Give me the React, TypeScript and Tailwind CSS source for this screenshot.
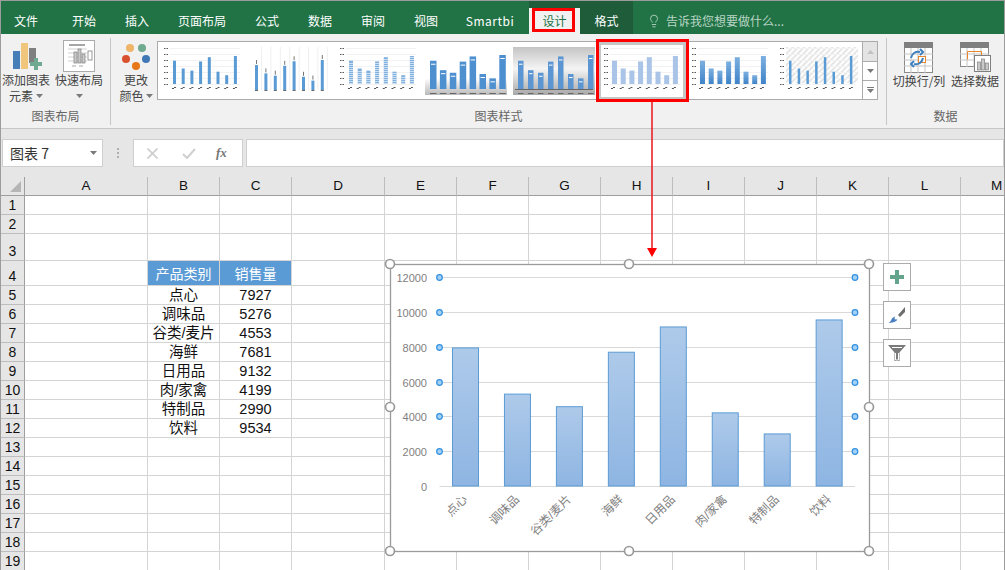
import { Fragment } from 'react';
import { Lightbulb } from 'lucide-react';

const tabs = [
  { label: '文件', cls: 'w-[50px]' },
  { label: '开始', cls: 'w-[52px] ml-[7px]' },
  { label: '插入', cls: 'w-[52px] ml-px' },
  { label: '页面布局', cls: 'w-[76px] ml-px' },
  { label: '公式', cls: 'w-[52px] ml-px' },
  { label: '数据', cls: 'w-[52px] ml-px' },
  { label: '审阅', cls: 'w-[52px] ml-px' },
  { label: '视图', cls: 'w-[52px] ml-px' },
  { label: 'Smartbi', cls: 'w-[74px] ml-px tracking-[0.5px]' },
];

const sales = [7927, 5276, 4553, 7681, 9132, 4199, 2990, 9534];
const categories = ['点心', '调味品', '谷类/麦片', '海鲜', '日用品', '肉/家禽', '特制品', '饮料'];
const colLabels = ['A', 'B', 'C', 'D', 'E', 'F', 'G', 'H', 'I', 'J', 'K', 'L', 'M'];
const rowCount = 19;

const thumbs = [
  { start: 15, width: 3, step: 8.7, base: 42, max: 28, fill: '#5b9bd5', kind: 'plain' },
  { start: 9, width: 3, step: 9.4, base: 48, max: 30, fill: '#5b9bd5', kind: 'error' },
  { start: 15, width: 4, step: 8.7, base: 42, max: 28, fill: '#7fb0de', kind: 'striped' },
  { start: 8, width: 6.5, step: 9.9, base: 47, max: 34, fill: '#4e8fd0', kind: 'shadow' },
  { start: 8, width: 5.5, step: 10, base: 47, max: 34, fill: '#5b96d2', kind: 'gray' },
  { start: 14, width: 5, step: 8.7, base: 42, max: 28, fill: '#a9c4e6', kind: 'pale' },
  { start: 14, width: 5, step: 8.7, base: 42, max: 28, fill: 'url(#thumbBlue)', kind: 'plain' },
  { start: 15, width: 2.5, step: 8.7, base: 42, max: 28, fill: '#5b9bd5', kind: 'hatch' },
];

function Thumb({ index }: { index: number }) {
  const t = thumbs[index];
  const big = t.kind === 'shadow' || t.kind === 'gray' || t.kind === 'error';
  return (
    <svg width="82" height="52" viewBox="3 3 82 52" className="block">
      <defs>
        <linearGradient id="thumbBlue" x1="0" y1="0" x2="0" y2="1">
          <stop offset="0" stopColor="#7db0e0" />
          <stop offset="1" stopColor="#3f83c8" />
        </linearGradient>
        <linearGradient id="thumbShadow" x1="0" y1="0" x2="0" y2="1">
          <stop offset="0" stopColor="#ffffff" />
          <stop offset="0.65" stopColor="#ffffff" />
          <stop offset="1" stopColor="#b9b9b9" />
        </linearGradient>
        <linearGradient id="thumbGray" x1="0" y1="0" x2="0" y2="1">
          <stop offset="0" stopColor="#c4c4c4" />
          <stop offset="0.45" stopColor="#f4f4f4" />
          <stop offset="1" stopColor="#a8a8a8" />
        </linearGradient>
        <pattern id="thumbHatch" width="4" height="4" patternUnits="userSpaceOnUse" patternTransform="rotate(45)">
          <rect width="4" height="4" fill="#ffffff" />
          <rect width="2" height="4" fill="#e6e6e6" />
        </pattern>
      </defs>
      {t.kind === 'shadow' && <rect x="3" y="5" width="82" height="48" fill="url(#thumbShadow)" />}
      {t.kind === 'gray' && <rect x="3" y="5" width="82" height="48" fill="url(#thumbGray)" />}
      {t.kind === 'hatch' && <rect x="12" y="5" width="72" height="36" fill="url(#thumbHatch)" />}
      {t.kind === 'error' &&
        sales.map((_, i) => (
          <rect key={i} x={t.start + i * t.step + 6} y="5" width="1" height="43" fill="#efefef" />
        ))}
      {!big &&
        [0, 1, 2, 3, 4, 5, 6].map((i) => (
          <Fragment key={i}>
            <rect x="12" y={6 + i * 6} width="70" height="1" fill="#f2f2f2" />
            <rect x="6" y={6 + i * 6} width="1.5" height="1" fill="#555555" />
            <rect x="8.5" y={6 + i * 6} width="1.5" height="1" fill="#555555" />
          </Fragment>
        ))}
      {t.kind === 'gray' && <rect x="5" y={t.base} width="78" height="1" fill="#666666" />}
      {sales.map((v, i) => {
        const h = (v / 9534) * t.max;
        const x = t.start + i * t.step;
        return (
          <Fragment key={i}>
            <rect x={x} y={t.base - h} width={t.width} height={h} fill={t.fill} />
            {t.kind === 'striped' &&
              Array.from({ length: Math.floor(h / 2) }).map((_, k) => (
                <rect key={k} x={x} y={t.base - 2 * k - 1} width={t.width} height="0.6" fill="#ffffff" />
              ))}
            {t.kind === 'error' && <rect x={x + 1} y={t.base - h - 5} width="1" height="4" fill="#777777" />}
            {(t.kind === 'shadow' || t.kind === 'gray') && (
              <rect x={x + 1} y={t.base - h + 3} width={t.width - 2} height="1" fill="#ffffff" />
            )}
            {big ? (
              <rect x={x} y={t.base + (t.kind === 'error' ? 0 : 4)} width={t.width} height="1" fill="#666666" />
            ) : (
              <Fragment>
                <rect x={x - 1} y={t.base + 4} width="2" height="1" fill="#555555" />
                <rect x={x + 1} y={t.base + 3} width="2" height="1" fill="#555555" />
              </Fragment>
            )}
          </Fragment>
        );
      })}
    </svg>
  );
}

function Caret({ className = '' }: { className?: string }) {
  return (
    <svg width="7" height="4" viewBox="0 0 7 4" className={className}>
      <path d="M0 0h7L3.5 4z" fill="#7a7a7a" />
    </svg>
  );
}

function AddElementIcon() {
  return (
    <svg width="30" height="30" viewBox="0 0 30 30">
      <rect x="1" y="9" width="7" height="18" fill="#467fb7" />
      <rect x="9" y="1" width="7" height="26" fill="#f0c67c" />
      <rect x="17" y="6" width="7" height="15" fill="#7f7f7f" />
      <path d="M21 18h4v-4h4v4h4v4h-4v4h-4v-4h-4z" transform="translate(-3 2)" fill="#6fa98f" />
    </svg>
  );
}

function QuickLayoutIcon() {
  return (
    <svg width="32" height="32" viewBox="0 0 32 32">
      <rect x="0.5" y="0.5" width="31" height="31" fill="#ffffff" stroke="#ababab" />
      <rect x="6" y="4" width="16" height="2" fill="#a6a6a6" />
      <path d="M5 9h19M5 13h19M5 17h19M5 21h19" stroke="#d0d0d0" />
      <rect x="11" y="12" width="3" height="11" fill="#c9c9c9" stroke="#7f7f7f" strokeWidth="0.7" />
      <rect x="15" y="9" width="3" height="14" fill="#c9c9c9" stroke="#7f7f7f" strokeWidth="0.7" />
      <rect x="19" y="14" width="3" height="9" fill="#c9c9c9" stroke="#7f7f7f" strokeWidth="0.7" />
      <rect x="25" y="11" width="4" height="9" fill="#ffffff" stroke="#7f7f7f" strokeWidth="0.8" />
      <path d="M9 26h4M16 26h4" stroke="#a6a6a6" />
    </svg>
  );
}

function ColorsIcon() {
  return (
    <svg width="30" height="28" viewBox="0 0 30 28">
      <circle cx="9" cy="5" r="4" fill="#efb468" />
      <circle cx="21" cy="5" r="4" fill="#6fa98f" />
      <circle cx="5" cy="16" r="4" fill="#d9502f" />
      <circle cx="25" cy="16" r="4" fill="#3f78b5" />
      <circle cx="15" cy="23" r="4" fill="#e8771a" />
    </svg>
  );
}

function SwitchIcon() {
  return (
    <svg width="30" height="32" viewBox="0 0 30 32">
      <rect x="0.5" y="0.5" width="28" height="30" fill="#ffffff" stroke="#8a8a8a" />
      <rect x="0" y="0" width="29" height="6" fill="#7f7f7f" />
      <path d="M0 12h29M0 18h29M0 24h29M7 6v25M14 6v25M21 6v25" stroke="#c4c4c4" />
      <rect x="14.5" y="14.5" width="7" height="6" fill="#ffffff" stroke="#e8872b" />
      <path d="M7 16c1-5 5-7 9-6M16 7l3 3-3 3" fill="none" stroke="#3f7fbd" strokeWidth="2" />
      <path d="M19 16c-1 5-5 7-9 6M10 19l-3 3 3 3" fill="none" stroke="#3f7fbd" strokeWidth="2" />
    </svg>
  );
}

function SelectDataIcon() {
  return (
    <svg width="31" height="30" viewBox="0 0 31 30">
      <rect x="0.5" y="0.5" width="28" height="24" fill="#ffffff" stroke="#8a8a8a" />
      <rect x="0" y="0" width="29" height="6" fill="#7f7f7f" />
      <path d="M0 12h29M0 18h29M7 6v19M14 6v19M21 6v19" stroke="#c4c4c4" />
      <path d="M7.5 17.5v-8h14v4" fill="none" stroke="#e8872b" />
      <rect x="14.5" y="13.5" width="16" height="16" fill="#ffffff" stroke="#7f7f7f" />
      <rect x="17.5" y="20" width="3" height="8" fill="#c9c9c9" stroke="#7f7f7f" strokeWidth="0.7" />
      <rect x="21.5" y="17" width="3" height="11" fill="#c9c9c9" stroke="#7f7f7f" strokeWidth="0.7" />
      <rect x="25.5" y="21" width="3" height="7" fill="#c9c9c9" stroke="#7f7f7f" strokeWidth="0.7" />
    </svg>
  );
}

function Chart() {
  const x0 = 439.5;
  const base = 486;
  const scale = 209 / 12000;
  const ticks = [12000, 10000, 8000, 6000, 4000, 2000, 0];
  const handles = [
    [390, 264], [629, 264], [869, 264], [390, 407], [869, 407], [390, 551], [629, 551], [869, 551],
  ];
  return (
    <svg
      width="492"
      height="300"
      viewBox="384 258 492 300"
      className="absolute left-[383px] top-[257px] font-['Liberation_Sans','Noto_Sans_CJK_SC',sans-serif]"
    >
      <defs>
        <linearGradient id="barFill" x1="0" y1="0" x2="0" y2="1">
          <stop offset="0" stopColor="#aecaea" />
          <stop offset="1" stopColor="#8eb5e2" />
        </linearGradient>
      </defs>
      <rect x="390.5" y="264.5" width="479" height="287" fill="#ffffff" stroke="#9a9a9a" strokeWidth="1.3" />
      {ticks.map((v) => {
        const y = Math.round(base - v * scale) + 0.5;
        return (
          <Fragment key={v}>
            <line x1={x0} x2="855" y1={y} y2={y} stroke="#d9d9d9" strokeWidth="1" />
            <text x="427" y={y + 4} textAnchor="end" fontSize="11" fill="#7f7f7f">{v}</text>
          </Fragment>
        );
      })}
      {sales.map((v, i) => {
        const x = 452.5 + i * 51.95;
        const h = v * scale;
        return (
          <rect key={i} x={x} y={base - h} width="26" height={h} fill="url(#barFill)" stroke="#5b9bd5" strokeWidth="1" />
        );
      })}
      {categories.map((c, i) => {
        const x = 468 + i * 51.95;
        return (
          <text key={c} x={x} y="500" textAnchor="end" fontSize="12" fill="#7f7f7f" transform={`rotate(-45 ${x} 500)`}>
            {c}
          </text>
        );
      })}
      {ticks.slice(0, 6).map((v) => (
        <Fragment key={v}>
          <circle cx={x0} cy={Math.round(base - v * scale) + 0.5} r="2.8" fill="#a3d0f5" stroke="#2f8fe0" strokeWidth="1.2" />
          <circle cx="855" cy={Math.round(base - v * scale) + 0.5} r="2.8" fill="#a3d0f5" stroke="#2f8fe0" strokeWidth="1.2" />
        </Fragment>
      ))}
      {handles.map(([x, y]) => (
        <circle key={`${x}-${y}`} cx={x} cy={y} r="4.5" fill="#ffffff" stroke="#9a9a9a" strokeWidth="1.7" />
      ))}
    </svg>
  );
}

export default function App() {
  return (
    <div className="relative w-[1005px] h-[570px] overflow-hidden border-t border-l border-r border-[#9c9c9c] bg-white text-[12px] text-[#444444] font-['Noto_Sans_CJK_SC','Liberation_Sans',sans-serif]">
      {/* tabs */}
      <div className="flex h-[33px] bg-[#217346] text-white">
        {tabs.map((t) => (
          <div key={t.label} className={`flex items-center justify-center pt-[6px] ${t.cls}`}>
            {t.label}
          </div>
        ))}
        <div className="ml-[2px] flex h-[33px] w-[104px] items-end bg-[#1e5c3a]">
          <div className="relative flex h-[26px] w-[51px] items-center justify-center bg-[#f1f1f1] text-[#217346]">
            设计
            <div className="absolute left-[3px] top-0 h-[24px] w-[43px] border-[3px] border-[#ff0000]" />
          </div>
          <div className="flex h-[33px] w-[53px] items-center justify-center pt-[6px]">格式</div>
        </div>
        <div className="ml-[14px] flex items-center gap-[5px] pt-[6px] text-[#b9d5c5]">
          <Lightbulb size={14} strokeWidth={1.5} />
          <span>告诉我您想要做什么...</span>
        </div>
      </div>

      {/* ribbon */}
      <div className="flex h-[95px] border-b border-[#c6c6c6] bg-[#f1f1f1] pt-[4px]">
        <div className="flex h-[87px] w-[110px] flex-col border-r border-[#c6c6c6]">
          <div className="flex h-[69px] gap-[5px] pl-px pt-[2px]">
            <div className="flex w-[48px] flex-col items-center">
              <div className="h-[32px] pl-[2px] pt-[2px]"><AddElementIcon /></div>
              <div className="leading-[16px] whitespace-nowrap">添加图表</div>
              <div className="flex items-center gap-[3px] leading-[16px]">元素<Caret /></div>
            </div>
            <div className="flex w-[48px] flex-col items-center">
              <div className="h-[32px]"><QuickLayoutIcon /></div>
              <div className="leading-[16px] whitespace-nowrap">快速布局</div>
              <div className="flex h-[16px] items-center"><Caret /></div>
            </div>
          </div>
          <div className="mt-[1px] text-center leading-[16px] text-[#666666]">图表布局</div>
        </div>

        <div className="flex h-[87px] w-[776px] flex-col border-r border-[#c6c6c6]">
          <div className="flex h-[69px]">
            <div className="ml-[10px] flex w-[30px] flex-col items-center pt-[5px]">
              <div className="h-[29px]"><ColorsIcon /></div>
              <div className="leading-[16px] whitespace-nowrap">更改</div>
              <div className="flex items-center gap-[2px] whitespace-nowrap leading-[16px]">颜色<Caret /></div>
            </div>
            <div className="ml-[6px] mt-[3px] flex h-[59px] w-[721px] border border-[#ababab] bg-white">
              {thumbs.map((_, i) =>
                i === 5 ? (
                  <div key={i} className="relative h-[57px] w-[88px] bg-[#c6c6c6] p-[3px]">
                    <div className="bg-white"><Thumb index={i} /></div>
                    <div className="absolute left-[-2px] top-[-3px] h-[63px] w-[93px] border-[3px] border-[#ff0000]" />
                  </div>
                ) : (
                  <div key={i} className="h-[57px] w-[88px] p-[3px]"><Thumb index={i} /></div>
                )
              )}
              <div className="flex w-[15px] flex-col border-l border-[#ababab] bg-[#f7f7f7]">
                <div className="flex h-[20px] items-center justify-center border-b border-[#ababab] bg-[#e4e4e4]">
                  <svg width="7" height="4" viewBox="0 0 7 4"><path d="M3.5 0L7 4H0z" fill="#c2c2c2" /></svg>
                </div>
                <div className="flex h-[19px] items-center justify-center border-b border-[#ababab] bg-white">
                  <Caret />
                </div>
                <div className="flex flex-1 flex-col items-center justify-center gap-[1px] bg-white">
                  <div className="h-px w-[7px] bg-[#7a7a7a]" />
                  <Caret />
                </div>
              </div>
            </div>
          </div>
          <div className="mt-[1px] text-center leading-[16px] text-[#666666]">图表样式</div>
        </div>

        <div className="flex h-[87px] flex-1 flex-col">
          <div className="flex h-[69px] pl-[4px] pt-[4px]">
            <div className="flex w-[56px] flex-col items-center">
              <div className="h-[31px]"><SwitchIcon /></div>
              <div className="leading-[16px] whitespace-nowrap">切换行/列</div>
            </div>
            <div className="flex w-[56px] flex-col items-center">
              <div className="h-[31px]"><SelectDataIcon /></div>
              <div className="leading-[16px] whitespace-nowrap">选择数据</div>
            </div>
          </div>
          <div className="mt-[1px] text-center leading-[16px] text-[#666666]">数据</div>
        </div>
      </div>

      {/* formula bar */}
      <div className="flex h-[48px] items-start bg-[#e6e6e6] pt-[10px] pl-px">
        <div className="flex h-[28px] w-[101px] items-center justify-between border border-[#cfcfcf] bg-white pl-[7px] pr-[5px] text-[14px] text-[#333333]">
          图表 7
          <Caret />
        </div>
        <div className="flex w-[30px] flex-col items-center gap-[2px] pt-[9px]">
          <div className="h-[2px] w-[2px] bg-[#b0b0b0]" />
          <div className="h-[2px] w-[2px] bg-[#b0b0b0]" />
          <div className="h-[2px] w-[2px] bg-[#b0b0b0]" />
        </div>
        <div className="flex h-[28px] w-[110px] items-center border border-[#cfcfcf] bg-white">
          <svg width="11" height="11" viewBox="0 0 11 11" className="ml-[13px]">
            <path d="M0.5 0.5l10 10M10.5 0.5l-10 10" stroke="#cfcfcf" strokeWidth="1.8" />
          </svg>
          <svg width="14" height="11" viewBox="0 0 14 11" className="ml-[24px]">
            <path d="M1 6l4 4 8-9" fill="none" stroke="#cfcfcf" strokeWidth="2" />
          </svg>
          <span className="ml-[20px] font-['Liberation_Serif',serif] text-[13px] font-bold italic text-[#777777]">fx</span>
        </div>
        <div className="ml-[3px] h-[28px] flex-1 border border-[#cfcfcf] bg-white" />
      </div>

      {/* sheet */}
      <div className="grid grid-cols-[24px_123px_72px_72px_93px_72px_72px_72px_72px_72px_72px_72px_72px_72px] grid-rows-[19px_19px_19px_27px_25px_repeat(15,19px)] font-['Liberation_Sans','Noto_Sans_CJK_SC',sans-serif] text-[14.5px] text-[#111111]">
        <div className="flex items-end justify-end border-r border-b border-[#9e9e9e] bg-[#e6e6e6] pb-[3px] pr-[3px]">
          <svg width="11" height="11" viewBox="0 0 11 11"><path d="M11 0v11H0z" fill="#b5b5b5" /></svg>
        </div>
        {colLabels.map((c) => (
          <div key={c} className="flex items-center justify-center border-r border-b border-r-[#bdbdbd] border-b-[#9e9e9e] bg-[#e6e6e6] text-[13.5px] leading-none">
            {c}
          </div>
        ))}
        {Array.from({ length: rowCount }).map((_, r) => {
          const row = r + 1;
          return (
            <Fragment key={row}>
              <div className="flex items-end justify-center border-r border-b border-r-[#9e9e9e] border-b-[#bdbdbd] bg-[#e6e6e6] leading-[18px] text-[14px]">
                {row}
              </div>
              {colLabels.map((c) => {
                const dataIndex = row - 5;
                if (row === 4 && (c === 'B' || c === 'C')) {
                  return (
                    <div key={c} className="flex items-center justify-center border-r border-b border-[#d4d4d4] bg-[#5b9bd5] text-[14px] text-white font-['Noto_Sans_CJK_SC',sans-serif]">
                      {c === 'B' ? '产品类别' : '销售量'}
                    </div>
                  );
                }
                const hasData = dataIndex >= 0 && dataIndex < sales.length && (c === 'B' || c === 'C');
                return (
                  <div key={c} className="flex items-center justify-center overflow-hidden whitespace-nowrap border-r border-b border-[#d4d4d4] leading-none">
                    {hasData ? (c === 'B' ? categories[dataIndex] : sales[dataIndex]) : null}
                  </div>
                );
              })}
            </Fragment>
          );
        })}
      </div>

      <Chart />

      {/* chart side buttons */}
      <div className="absolute left-[882px] top-[262px] flex flex-col gap-[10px]">
        <div className="flex h-[28px] w-[28px] items-center justify-center border border-[#ababab] bg-white">
          <svg width="14" height="14" viewBox="0 0 14 14"><path d="M5 0h4v5h5v4H9v5H5V9H0V5h5z" fill="#65a48c" /></svg>
        </div>
        <div className="flex h-[28px] w-[28px] items-center justify-center border border-[#ababab] bg-white">
          <svg width="18" height="18" viewBox="0 0 18 18">
            <path d="M10 9l7-8v5l-5 5z" fill="#6e6e6e" />
            <path d="M0 17c3 0 3-5 6-6 2-1 4 1 3 3-1 2-5 3-9 3z" fill="#4a7fbf" />
            <circle cx="8" cy="12" r="1.5" fill="#ffffff" />
          </svg>
        </div>
        <div className="flex h-[28px] w-[28px] items-center justify-center border border-[#ababab] bg-white">
          <svg width="18" height="16" viewBox="0 0 18 16">
            <path d="M0 0h18l-6.5 7.5V16h-5V7.5z" fill="#7a7a7a" />
            <path d="M4 2.5h10M7.5 8v7h3V8" fill="none" stroke="#ffffff" strokeWidth="1" />
          </svg>
        </div>
      </div>

      {/* red arrow */}
      <svg width="12" height="158" viewBox="0 0 12 158" className="absolute left-[645px] top-[100px]">
        <line x1="6" y1="1" x2="6" y2="148" stroke="#e8141c" strokeWidth="1.5" />
        <path d="M1 147h10l-5 9z" fill="#ff0000" />
      </svg>
    </div>
  );
}
